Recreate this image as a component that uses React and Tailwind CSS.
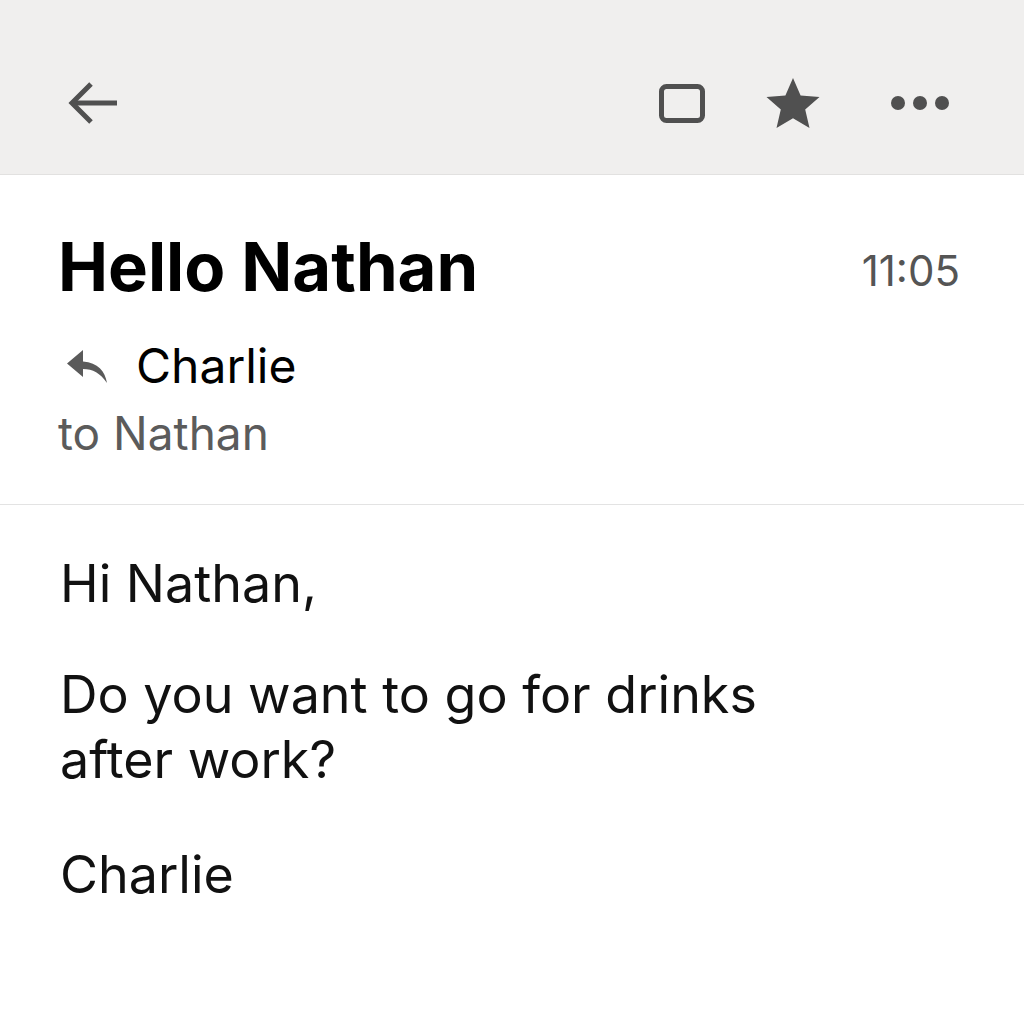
import React from 'react';

const ArrowBack = () => (
  <svg width="52" height="44" viewBox="0 0 52 44" fill="none" stroke="#505050" strokeWidth="5">
    <path d="M50 22H5" />
    <path d="M24 3L5 22l19 19" />
  </svg>
);

const SquareIcon = () => (
  <svg width="46" height="39" viewBox="0 0 46 39" fill="none">
    <rect x="2.5" y="2.5" width="41" height="34" rx="5" stroke="#505050" strokeWidth="5" />
  </svg>
);

const StarIcon = () => (
  <svg width="54" height="52" viewBox="0 0 54 52">
    <path d="M27 1l7.6 17.4 18.9 1.7-14.3 12.4 4.3 18.5L27 41.3 10.5 51l4.3-18.5L.5 20.1l18.9-1.7z" fill="#505050" />
  </svg>
);

const DotsIcon = () => (
  <svg width="58" height="14" viewBox="0 0 58 14" fill="#505050">
    <circle cx="7" cy="7" r="7" />
    <circle cx="29" cy="7" r="7" />
    <circle cx="51" cy="7" r="7" />
  </svg>
);

const ReplyIcon = () => (
  <svg width="42" height="35" viewBox="0 0 42 35">
    <path d="M17 1L1 14.5 17 28v-8c10 0 17 4 24 14-2-12-9-20-24-21.5z" fill="#5a5a5a" />
  </svg>
);

export default function App() {
  return (
    <div className="w-[1024px] h-[1024px] bg-white overflow-hidden" style={{ fontFamily: 'Inter, "Liberation Sans", sans-serif' }}>
      <div className="h-[175px] bg-[#f0efee] border-b border-[#e2e1e0] flex items-center pt-[32px] pl-[67px] pr-[75px]">
        <ArrowBack />
        <div className="ml-auto flex items-center">
          <SquareIcon />
          <div className="ml-[61px]"><StarIcon /></div>
          <div className="ml-[71px]"><DotsIcon /></div>
        </div>
      </div>

      <div className="pl-[58px] pr-[64px] pt-[52px] h-[330px] border-b border-[#e3e3e3]">
        <div className="flex items-start justify-between">
          <h1 className="text-[67px] font-bold text-black leading-[80px]">Hello Nathan</h1>
          <span className="mt-[23px] text-[42px] text-[#555] leading-[42px]">11:05</span>
        </div>
        <div className="flex items-center mt-[30px] h-[58px]">
          <div className="ml-[8px]"><ReplyIcon /></div>
          <span className="ml-[28px] text-[48px] text-black leading-[58px]">Charlie</span>
        </div>
        <div className="text-[46px] text-[#5b5b5b] leading-[56px] mt-[10px]">to Nathan</div>
      </div>

      <div className="pl-[60px] pt-[46px] text-[52px] text-[#111] leading-[65px]">
        <p>Hi Nathan,</p>
        <p className="mt-[46px] w-[760px]">Do you want to go for drinks after work?</p>
        <p className="mt-[50px]">Charlie</p>
      </div>
    </div>
  );
}
